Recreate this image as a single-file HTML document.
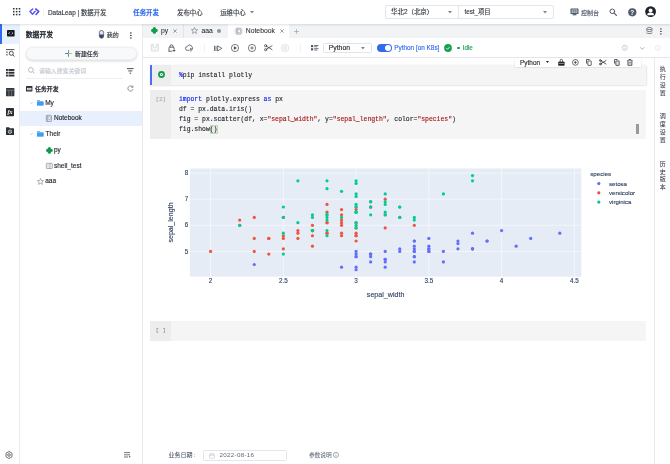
<!DOCTYPE html>
<html lang="zh-CN">
<head>
<meta charset="utf-8">
<title>DataLeap | 数据开发</title>
<style>
*{box-sizing:border-box;margin:0;padding:0}
html,body{width:670px;height:464px;overflow:hidden;background:#fff}
body{position:relative;font-family:"Liberation Sans","Noto Sans CJK SC",sans-serif;font-size:6.4px;color:#1d2129;-webkit-font-smoothing:antialiased;-webkit-text-stroke-width:0.13px;will-change:transform}
.a{position:absolute}
.t{position:absolute;white-space:nowrap;line-height:10px;height:10px;margin-top:-5px}
.b{font-weight:bold}
.mono{font-family:"Liberation Mono","DejaVu Sans Mono",monospace;font-size:6.42px;white-space:pre}
svg{display:block;overflow:visible}
.ic{position:absolute}
.kw{color:#0a1bf5}.st{color:#a31515}
</style>
</head>
<body>

<!-- ===== header ===== -->
<div class="a" id="header" style="left:0;top:0;width:670px;height:24px;background:#fff;box-shadow:0 0.5px 2px rgba(0,0,0,.12);z-index:5">
  <svg class="ic" style="left:13px;top:8px" width="8" height="8" viewBox="0 0 8 8" fill="#2b2f36">
    <rect x="0" y="0" width="1.5" height="1.5"/><rect x="2.9" y="0" width="1.5" height="1.5"/><rect x="5.8" y="0" width="1.5" height="1.5"/>
    <rect x="0" y="2.9" width="1.5" height="1.5"/><rect x="2.9" y="2.9" width="1.5" height="1.5"/><rect x="5.8" y="2.9" width="1.5" height="1.5"/>
    <rect x="0" y="5.8" width="1.5" height="1.5"/><rect x="2.9" y="5.8" width="1.5" height="1.5"/><rect x="5.8" y="5.8" width="1.5" height="1.5"/>
  </svg>
  <svg class="ic" style="left:28.9px;top:8px" width="11" height="8" viewBox="0 0 11 8" fill="none" stroke-linecap="round" stroke-linejoin="round">
    <path d="M3.7 1 L1 3.6 L3.5 6.3 L6.2 3.3" stroke="#5656fb" stroke-width="1.45"/>
    <path d="M6.7 0.9 L9.8 3.6 L7 6.4" stroke="#4a3ff5" stroke-width="1.45"/>
  </svg>
  <div class="a" style="left:43px;top:7px;width:1px;height:10px;background:#f3f4f6"></div>
  <div class="t" style="left:48px;top:12.8px;font-size:6.4px;color:#33383f">DataLeap | 数据开发</div>
  <div class="t b" style="left:133.3px;top:12.8px;font-size:6.4px;color:#2f6bf0">任务开发</div>
  <div class="t" style="left:177px;top:12.8px;font-size:6.4px;color:#33383f">发布中心</div>
  <div class="t" style="left:220.2px;top:12.8px;font-size:6.4px;color:#33383f">运维中心</div>
  <svg class="ic" style="left:249.6px;top:10.7px" width="4" height="3" viewBox="0 0 4 3"><path d="M0 0H4L2 2.6Z" fill="#7a8599"/></svg>

  <div class="a" style="left:385.4px;top:4.7px;width:168.3px;height:14.6px;border:0.6px solid #e3e5e9;border-radius:2px;background:#fff"></div>
  <div class="a" style="left:458px;top:4.7px;width:0.6px;height:14.6px;background:#e3e5e9"></div>
  <div class="t" style="left:391px;top:12px;font-size:6.45px;color:#33383f">华北2（北京）</div>
  <svg class="ic" style="left:447.8px;top:10.8px" width="4" height="3" viewBox="0 0 4 3"><path d="M0 0H4L2 2.5Z" fill="#7a8599"/></svg>
  <div class="t" style="left:464.4px;top:12px;font-size:6.3px;color:#33383f">test_项目</div>
  <svg class="ic" style="left:543.3px;top:10.8px" width="4" height="3" viewBox="0 0 4 3"><path d="M0 0H4L2 2.5Z" fill="#7a8599"/></svg>

  <svg class="ic" style="left:570px;top:8px" width="9" height="8" viewBox="0 0 9 8">
    <rect x="0.5" y="0.5" width="8" height="5.6" rx="0.6" fill="#4e5969"/>
    <rect x="1.6" y="1.5" width="5.8" height="3.4" fill="#cfd5de"/>
    <path d="M1.6 2.6H7.4M1.6 3.7H7.4M3.5 1.5V4.9M5.5 1.5V4.9" stroke="#4e5969" stroke-width="0.4"/>
    <rect x="2.6" y="6.1" width="3.8" height="1.2" fill="#4e5969"/>
  </svg>
  <div class="t" style="left:581px;top:12.5px;font-size:6px;color:#4e5969">控制台</div>
  <svg class="ic" style="left:609px;top:8px" width="9" height="9" viewBox="0 0 9 9" fill="none" stroke="#4e5969" stroke-linecap="round"><circle cx="3.3" cy="3.3" r="2.3" stroke-width="1"/><path d="M5.2 5.2L7.4 7.4" stroke-width="1.2"/></svg>
  <svg class="ic" style="left:627.8px;top:7.8px" width="9" height="9" viewBox="0 0 9 9"><circle cx="4.3" cy="4.3" r="4.1" fill="#4e5969"/><text x="4.3" y="6.6" font-size="6.4" font-weight="bold" text-anchor="middle" fill="#fff" font-family="Liberation Sans, sans-serif">?</text></svg>
  <svg class="ic" style="left:645px;top:6.2px" width="12" height="12" viewBox="0 0 12 12"><circle cx="5.6" cy="5.6" r="5.4" fill="#1d2129"/><circle cx="5.6" cy="4.4" r="2" fill="#fff"/><path d="M2.1 9.2C2.3 7.2 3.8 6.6 5.6 6.6S8.9 7.2 9.1 9.2Z" fill="#fff"/></svg>
</div>

<!-- ===== left rail ===== -->
<div class="a" id="rail" style="left:0;top:24px;width:20px;height:440px;background:#fff;border-right:0.6px solid #e9eaed">
  <div class="a" style="left:0;top:0;width:19.5px;height:19.5px;background:#e8f0fe"></div>
  <div class="a" style="left:0;top:0;width:1.7px;height:19.5px;background:#2f6bf0"></div>
  <!-- code -->
  <svg class="ic" style="left:6.5px;top:6px" width="8" height="7" viewBox="0 0 8 7"><rect x="0" y="0" width="7.6" height="6.4" rx="0.7" fill="#14171c"/><path d="M2.9 2L1.7 3.2L2.9 4.4M4.7 2L5.9 3.2L4.7 4.4" stroke="#fff" stroke-width="0.7" fill="none"/></svg>
  <!-- search list -->
  <svg class="ic" style="left:5.8px;top:24.6px" width="9" height="8" viewBox="0 0 9 8" fill="none" stroke="#2b2f36" stroke-width="0.85"><path d="M0 0.6H8.4M0 3.2H1.8M0 5.8H1.8"/><circle cx="5.3" cy="4.3" r="2"/><path d="M6.8 5.9L8.4 7.5"/></svg>
  <!-- list -->
  <svg class="ic" style="left:5.8px;top:44.6px" width="9" height="8" viewBox="0 0 9 8" fill="#2b2f36"><rect x="0" y="0" width="8.4" height="1.9"/><rect x="0" y="2.8" width="8.4" height="1.9"/><rect x="0" y="5.6" width="8.4" height="1.9"/><rect x="1.9" y="0" width="0.55" height="8" fill="#fff"/></svg>
  <!-- table -->
  <svg class="ic" style="left:5.8px;top:64px" width="9" height="9" viewBox="0 0 9 9"><rect x="0" y="0" width="8.4" height="8.3" rx="0.5" fill="#33383f"/><path d="M0 2.2H8.4M2.9 2.2V8.3M5.6 2.2V8.3" stroke="#9aa0aa" stroke-width="0.5"/></svg>
  <!-- fx -->
  <svg class="ic" style="left:6.2px;top:84px" width="9" height="9" viewBox="0 0 9 9"><rect x="0" y="0" width="8" height="8.2" rx="0.8" fill="#2b2f36"/><text x="4" y="6.3" font-size="6" font-style="italic" font-weight="bold" text-anchor="middle" fill="#fff" font-family="Liberation Serif, serif">fx</text></svg>
  <!-- cloud folder -->
  <svg class="ic" style="left:6.2px;top:103.2px" width="9" height="9" viewBox="0 0 9 9"><path d="M0 0.7Q0 0.2 0.5 0.2H3L3.9 1.2H7.5Q8 1.2 8 1.7V7.4Q8 7.9 7.5 7.9H0.5Q0 7.9 0 7.4Z" fill="#2b2f36"/><circle cx="4" cy="4.7" r="1.7" fill="none" stroke="#fff" stroke-width="0.7"/><circle cx="4" cy="4.7" r="0.55" fill="#fff"/></svg>
  <!-- gear -->
  <svg class="ic" style="left:4.6px;top:427px" width="8" height="8" viewBox="0 0 8 8" fill="none" stroke="#33383f" stroke-width="0.7"><path d="M4 0.5L7 2.2V5.8L4 7.5L1 5.8V2.2Z"/><circle cx="4" cy="4" r="1.3"/></svg>
</div>

<!-- ===== side panel ===== -->
<div class="a" id="side" style="left:20px;top:24px;width:122.6px;height:440px;background:#fff;border-right:0.6px solid #e9eaed">
  <div class="t" style="left:5.8px;top:10.8px;font-size:6.8px;color:#1d2129;-webkit-text-stroke-width:0.32px">数据开发</div>
  <svg class="ic" style="left:79px;top:6px" width="5" height="9" viewBox="0 0 5 9"><rect x="0.4" y="0.4" width="4.2" height="7.8" rx="2.1" fill="#dfe5f2" stroke="#3b4660" stroke-width="0.7"/><path d="M0.4 4.6H4.6V6.1A2.1 2.1 0 0 1 0.4 6.1Z" fill="#3b4660"/></svg>
  <div class="t" style="left:86.8px;top:10.8px;font-size:6px;color:#33383f">我的</div>
  <svg class="ic" style="left:109.6px;top:7.5px" width="2" height="8" viewBox="0 0 2 8" fill="#1d2129"><circle cx="0.9" cy="0.9" r="0.75"/><circle cx="0.9" cy="3.5" r="0.75"/><circle cx="0.9" cy="6.1" r="0.75"/></svg>

  <div class="a" style="left:5.6px;top:22.8px;width:111.8px;height:13.6px;border-radius:7px;background:#f8f9fb;border:0.5px solid #eef0f3;box-shadow:0 1px 3px rgba(0,0,0,.17)"></div>
  <svg class="ic" style="left:45px;top:26.2px" width="7" height="7" viewBox="0 0 7 7" stroke-width="1" stroke-linecap="round"><path d="M3.5 0.6V3.5" stroke="#37a0f5"/><path d="M3.5 3.5V6.4" stroke="#35b34a"/><path d="M0.6 3.5H3.5" stroke="#3b6cf5"/><path d="M3.5 3.5H6.4" stroke="#f5b400"/></svg>
  <div class="t" style="left:55px;top:29.6px;font-size:5.9px;color:#1d2129">新建任务</div>

  <svg class="ic" style="left:8.3px;top:42.7px" width="7" height="7" viewBox="0 0 7 7" fill="none" stroke="#9aa1ad" stroke-width="0.7"><circle cx="2.9" cy="2.9" r="2.4"/><path d="M4.7 4.7L6.4 6.4"/></svg>
  <div class="t" style="left:19px;top:46.8px;font-size:5.9px;color:#c4c8cf">请输入搜索关键词</div>
  <div class="a" style="left:6.4px;top:54px;width:97px;height:1px;background:#eceef1"></div>
  <svg class="ic" style="left:107.3px;top:43.5px" width="7" height="6" viewBox="0 0 7 6" stroke="#33383f" stroke-width="0.9"><path d="M0 0.6H6.6M1.3 2.9H5.3M2.5 5.2H4.1"/></svg>

  <!-- tree -->
  <svg class="ic" style="left:6px;top:61.8px" width="7" height="6" viewBox="0 0 7 6"><rect x="0" y="0" width="6.4" height="5.4" rx="0.6" fill="#2b2f36"/><rect x="1" y="1.9" width="4.4" height="2.3" fill="#fff"/><path d="M1.4 3.1H5" stroke="#2b2f36" stroke-width="0.6"/></svg>
  <div class="t" style="left:15px;top:64.9px;font-size:5.9px;color:#1d2129;-webkit-text-stroke:0.25px #1d2129">任务开发</div>
  <svg class="ic" style="left:106.8px;top:61.2px" width="7" height="7" viewBox="0 0 7 7" fill="none" stroke="#4e5969" stroke-width="0.65"><path d="M5.6 2A2.6 2.6 0 1 0 6 4.2"/><path d="M5.9 0.5V2.2H4.2" /></svg>

  <svg class="ic" style="left:9.6px;top:77.6px" width="3" height="2" viewBox="0 0 3 2" fill="none" stroke="#9aa1ad" stroke-width="0.5"><path d="M0.2 0.3L1.5 1.6L2.8 0.3"/></svg>
  <svg class="ic" style="left:17px;top:75.5px" width="7" height="6" viewBox="0 0 7 6"><path d="M0 0.5Q0 0 0.5 0H2.5L3.3 0.9H6Q6.5 0.9 6.5 1.4V5Q6.5 5.5 6 5.5H0.5Q0 5.5 0 5Z" fill="#6db8f7"/><path d="M0 1.9H6.5V5Q6.5 5.5 6 5.5H0.5Q0 5.5 0 5Z" fill="#3d9ff2"/></svg>
  <div class="t" style="left:25.2px;top:78.6px;font-size:6.5px;color:#1d2129">My</div>

  <div class="a" style="left:0;top:87.3px;width:122px;height:14.7px;background:#e8f0fe"></div>
  <svg class="ic" style="left:26.2px;top:91.2px" width="6" height="7" viewBox="0 0 6 7"><rect x="0.3" y="0.3" width="5.2" height="6.2" rx="0.7" fill="#dfe2e8" stroke="#6b7585" stroke-width="0.55"/><rect x="2" y="2" width="2.6" height="2.6" fill="#fff" stroke="#6b7585" stroke-width="0.45"/><path d="M1.2 0.3V6.5" stroke="#6b7585" stroke-width="0.45"/></svg>
  <div class="t" style="left:34px;top:94.4px;font-size:6.5px;color:#1d2129">Notebook</div>

  <svg class="ic" style="left:9.6px;top:108.8px" width="3" height="2" viewBox="0 0 3 2" fill="none" stroke="#9aa1ad" stroke-width="0.5"><path d="M0.2 0.3L1.5 1.6L2.8 0.3"/></svg>
  <svg class="ic" style="left:17px;top:106.8px" width="7" height="6" viewBox="0 0 7 6"><path d="M0 0.5Q0 0 0.5 0H2.5L3.3 0.9H6Q6.5 0.9 6.5 1.4V5Q6.5 5.5 6 5.5H0.5Q0 5.5 0 5Z" fill="#6db8f7"/><path d="M0 1.9H6.5V5Q6.5 5.5 6 5.5H0.5Q0 5.5 0 5Z" fill="#3d9ff2"/></svg>
  <div class="t" style="left:25.6px;top:110px;font-size:6.5px;color:#1d2129">Their</div>

  <svg class="ic" style="left:25.8px;top:122.8px" width="7" height="7" viewBox="0 0 7 7" fill="#0f9d4c"><circle cx="3.4" cy="1.65" r="1.6"/><circle cx="1.65" cy="3.4" r="1.6"/><circle cx="5.15" cy="3.4" r="1.6"/><circle cx="3.4" cy="5.15" r="1.6"/><rect x="2.4" y="2.4" width="2" height="2"/></svg>
  <div class="t" style="left:34px;top:125.8px;font-size:6.5px;color:#1d2129">py</div>

  <svg class="ic" style="left:25.8px;top:138.6px" width="7" height="6" viewBox="0 0 7 6"><rect x="0.3" y="0.3" width="6" height="5.2" rx="0.5" fill="#f3f4f7" stroke="#6b7585" stroke-width="0.55"/><path d="M4 0.3V5.5" stroke="#6b7585" stroke-width="0.5"/><path d="M1.3 2H2.8M1.3 3.6H2.8" stroke="#9aa1ad" stroke-width="0.45"/></svg>
  <div class="t" style="left:34px;top:142.2px;font-size:6.5px;color:#1d2129">shell_test</div>

  <svg class="ic" style="left:16.8px;top:153.6px" width="7" height="7" viewBox="0 0 7 7" fill="none" stroke="#5b6575" stroke-width="0.5" stroke-linejoin="round"><path d="M3.5 0.5L4.4 2.5L6.6 2.7L4.9 4.2L5.4 6.4L3.5 5.2L1.6 6.4L2.1 4.2L0.4 2.7L2.6 2.5Z"/></svg>
  <div class="t" style="left:25.2px;top:157.3px;font-size:6.5px;color:#1d2129">aaa</div>

  <svg class="ic" style="left:104.2px;top:428px" width="7" height="6" viewBox="0 0 7 6" stroke="#33383f" stroke-width="0.7"><path d="M0 0.6H6M0 2.8H6M0 5H4"/><path d="M4.8 4.3H6.6L5.7 5.7Z" fill="#33383f" stroke="none"/></svg>
</div>

<!-- ===== main ===== -->
<div class="a" id="tabs" style="left:142.6px;top:24px;width:527.4px;height:14px;background:#f2f3f5;-webkit-text-stroke-width:0.05px">
  <!-- py tab -->
  <svg class="ic" style="left:8.6px;top:3.4px" width="7" height="7" viewBox="0 0 7 7" fill="#0f9d4c"><circle cx="3.4" cy="1.65" r="1.6"/><circle cx="1.65" cy="3.4" r="1.6"/><circle cx="5.15" cy="3.4" r="1.6"/><circle cx="3.4" cy="5.15" r="1.6"/><rect x="2.4" y="2.4" width="2" height="2"/></svg>
  <div class="t" style="left:18.4px;top:7.3px;font-size:6.8px;color:#1d2129">py</div>
  <svg class="ic" style="left:30.8px;top:4.5px" width="4" height="4" viewBox="0 0 4 4" stroke="#4e5969" stroke-width="0.55"><path d="M0.3 0.3L3.7 3.7M3.7 0.3L0.3 3.7"/></svg>
  <div class="a" style="left:40.7px;top:0;width:0.6px;height:14px;background:#e3e5e9"></div>
  <!-- aaa tab -->
  <svg class="ic" style="left:48.8px;top:3.2px" width="7" height="7" viewBox="0 0 7 7" fill="none" stroke="#4e5969" stroke-width="0.5" stroke-linejoin="round"><path d="M3.5 0.5L4.4 2.5L6.6 2.7L4.9 4.2L5.4 6.4L3.5 5.2L1.6 6.4L2.1 4.2L0.4 2.7L2.6 2.5Z"/></svg>
  <div class="t" style="left:58.8px;top:7.3px;font-size:6.8px;color:#1d2129">aaa</div>
  <div class="a" style="left:74.2px;top:5px;width:4.4px;height:4.4px;border-radius:50%;background:#8a93a3"></div>
  <!-- notebook tab -->
  <div class="a" style="left:85.2px;top:0;width:61.2px;height:14px;background:#fff"></div>
  <div class="a" style="left:91.8px;top:2.6px;width:8.6px;height:8.6px;border-radius:50%;background:#edeff3"></div>
  <svg class="ic" style="left:93.4px;top:3.8px" width="6" height="7" viewBox="0 0 6 7"><rect x="0.3" y="0.3" width="4.9" height="5.9" rx="0.7" fill="#dfe2e8" stroke="#8a93a3" stroke-width="0.5"/><rect x="1.9" y="1.9" width="2.4" height="2.4" fill="#fff" stroke="#8a93a3" stroke-width="0.4"/><path d="M1.2 0.3V6.2" stroke="#8a93a3" stroke-width="0.4"/></svg>
  <div class="t" style="left:103.2px;top:7.3px;font-size:6.8px;color:#1d2129">Notebook</div>
  <svg class="ic" style="left:137px;top:4.5px" width="4" height="4" viewBox="0 0 4 4" stroke="#4e5969" stroke-width="0.55"><path d="M0.3 0.3L3.7 3.7M3.7 0.3L0.3 3.7"/></svg>
  <svg class="ic" style="left:151.6px;top:4.6px" width="5" height="5" viewBox="0 0 5 5" stroke="#8a93a3" stroke-width="0.55"><path d="M2.5 0V5M0 2.5H5"/></svg>
  <!-- right icons -->
  <svg class="ic" style="left:503px;top:3px" width="7" height="8" viewBox="0 0 7 8" fill="none" stroke="#33383f" stroke-width="0.6"><ellipse cx="3.4" cy="1.6" rx="2.5" ry="1.1"/><path d="M0.4 3.7C0.8 4.9 6 4.9 6.4 3.7M0.4 5.6C0.8 6.9 6 6.9 6.4 5.6M0.9 1.7V3.7M5.9 1.7V3.7"/></svg>
  <svg class="ic" style="left:517.6px;top:3.5px" width="2" height="8" viewBox="0 0 2 8" fill="#1d2129"><circle cx="0.9" cy="0.9" r="0.7"/><circle cx="0.9" cy="3.4" r="0.7"/><circle cx="0.9" cy="5.9" r="0.7"/></svg>
</div>

<div class="a" id="toolbar" style="left:142.6px;top:38px;width:527.4px;height:19.6px;background:#fff;border-bottom:0.6px solid #e3e5e9">
  <!-- save (disabled) -->
  <svg class="ic" style="left:8px;top:6px" width="8" height="8" viewBox="0 0 8 8" fill="#f4f5f7" stroke="#c9cdd4" stroke-width="0.6"><rect x="0.3" y="0.3" width="7.2" height="6.8" rx="0.6"/><path d="M2 0.3V3H5.8V0.3" fill="#fff"/></svg>
  <!-- lock -->
  <svg class="ic" style="left:25.6px;top:5.6px" width="8" height="8" viewBox="0 0 8 8" fill="none" stroke="#33383f" stroke-width="0.75" stroke-linecap="round"><path d="M1 7.2V3.9Q1 3.1 1.8 3.1H5.2Q6 3.1 6 3.9V4.6M1 7.2H4"/><path d="M2 3.1V2.3A1.5 1.5 0 0 1 5 2.3V3.1"/><path d="M5.2 6.5H7M6.1 5.6V7.4"/></svg>
  <!-- cloud -->
  <svg class="ic" style="left:42.6px;top:5.8px" width="9" height="8" viewBox="0 0 9 8" fill="none" stroke="#33383f" stroke-width="0.7" stroke-linecap="round" stroke-linejoin="round"><path d="M4 6.3H2.3A1.8 1.8 0 0 1 2.2 2.7A2.5 2.5 0 0 1 7 2.9A1.7 1.7 0 0 1 7.4 5"/><path d="M6 7.2V4.6M4.9 5.6L6 4.5L7.1 5.6"/></svg>
  <div class="a" style="left:61.4px;top:6px;width:1px;height:7.6px;background:#f0f1f3"></div>
  <!-- run all -->
  <svg class="ic" style="left:71.6px;top:6.5px" width="9" height="7" viewBox="0 0 9 7" fill="none" stroke="#33383f" stroke-width="0.7" stroke-linejoin="round"><path d="M0.5 0.8V6M2 0.8V6"/><path d="M3.6 0.9L7.8 3.4L3.6 5.9Z"/></svg>
  <!-- play circle -->
  <svg class="ic" style="left:88.4px;top:6px" width="8" height="8" viewBox="0 0 8 8" fill="none" stroke="#33383f" stroke-width="0.65" stroke-linejoin="round"><circle cx="4" cy="4" r="3.6"/><path d="M3.1 2.5L5.6 4L3.1 5.5Z" fill="#33383f" stroke-width="0.3"/></svg>
  <!-- plus circle -->
  <svg class="ic" style="left:105.4px;top:6px" width="8" height="8" viewBox="0 0 8 8" fill="none" stroke="#33383f" stroke-width="0.65"><circle cx="4" cy="4" r="3.6"/><path d="M4 2.3V5.7M2.3 4H5.7"/></svg>
  <!-- scissors -->
  <svg class="ic" style="left:121.8px;top:6.2px" width="9" height="8" viewBox="0 0 9 8" fill="none" stroke="#33383f" stroke-width="0.75" stroke-linecap="round"><circle cx="1.6" cy="1.7" r="1.1"/><circle cx="1.6" cy="5.7" r="1.1"/><path d="M2.6 2.3L8 5.6M2.6 5.1L8 1.8"/></svg>
  <!-- stop disabled -->
  <svg class="ic" style="left:138.6px;top:6px" width="8" height="8" viewBox="0 0 8 8" fill="none" stroke="#c9cdd4" stroke-width="0.6"><circle cx="4" cy="4" r="3.6"/><rect x="2.7" y="2.7" width="2.6" height="2.6" rx="0.3"/></svg>
  <div class="a" style="left:157.4px;top:6px;width:1px;height:7.6px;background:#f0f1f3"></div>
  <!-- list icon -->
  <svg class="ic" style="left:168.2px;top:7px" width="8" height="6" viewBox="0 0 8 6" fill="#4e5969"><rect x="0" y="0" width="2.2" height="2.2"/><rect x="0" y="3.2" width="2.2" height="2.2"/><rect x="3.2" y="0.1" width="4.3" height="0.8"/><rect x="3.2" y="1.4" width="3.2" height="0.8"/><rect x="3.2" y="3.3" width="4.3" height="0.8"/><rect x="3.2" y="4.6" width="3.2" height="0.8"/></svg>
  <!-- select -->
  <div class="a" style="left:180.6px;top:4.9px;width:48.8px;height:10.6px;border:0.6px solid #e3e5e9;border-radius:1.5px;background:#fff"></div>
  <div class="t" style="left:186.2px;top:10.4px;font-size:6.8px;color:#1d2129">Python</div>
  <svg class="ic" style="left:218.6px;top:9px" width="4" height="3" viewBox="0 0 4 3"><path d="M0 0H3.8L1.9 2.5Z" fill="#7a8599"/></svg>
  <!-- toggle -->
  <div class="a" style="left:234.4px;top:6px;width:14.6px;height:8px;border-radius:4px;background:#2f6bf0"></div>
  <div class="a" style="left:242.2px;top:7px;width:6px;height:6px;border-radius:50%;background:#fff"></div>
  <div class="t" style="left:251.7px;top:9.6px;font-size:6.4px;color:#2f6bf0">Python [on K8s]</div>
  <svg class="ic" style="left:301.8px;top:6px" width="8" height="8" viewBox="0 0 8 8"><circle cx="4" cy="4" r="3.9" fill="#1a9f52"/><path d="M2.3 4.1L3.5 5.3L5.7 2.9" stroke="#fff" stroke-width="0.8" fill="none"/></svg>
  <div class="a" style="left:314.6px;top:9px;width:2.4px;height:2.4px;border-radius:50%;background:#1a9f52"></div>
  <div class="t" style="left:320.1px;top:10.2px;font-size:6.3px;color:#1a9f52">Idle</div>
  <!-- right icons -->
  <svg class="ic" style="left:479.2px;top:7.2px" width="6" height="6" viewBox="0 0 6 6" fill="none" stroke="#8a93a3" stroke-width="0.45"><circle cx="2.8" cy="2.8" r="2.5"/><path d="M2.8 2.5V4.2M2.8 1.4V1.9"/></svg>
  <svg class="ic" style="left:497.4px;top:8.7px" width="5" height="3" viewBox="0 0 5 3" fill="none" stroke="#6b7585" stroke-width="0.55"><path d="M0.3 0.3L2.3 2.3L4.3 0.3"/></svg>
  <svg class="ic" style="left:512px;top:7.2px" width="6" height="6" viewBox="0 0 6 6" fill="none" stroke="#cfd3da" stroke-width="0.45"><circle cx="2.8" cy="2.8" r="2.5"/><path d="M2.8 2.5V4.2M2.8 1.4V1.9"/></svg>
</div>

<!-- right sidebar -->
<div class="a" id="rsb" style="left:654px;top:58px;width:16px;height:406px;background:#fff;border-left:0.6px solid #e9ebee;font-size:6px;color:#33383f;-webkit-text-stroke-width:0.05px;text-align:center;line-height:7.9px">
  <div class="a" style="left:-0.6px;top:8px;width:16.6px">执<br>行<br>设<br>置</div>
  <div class="a" style="left:-0.6px;top:55.2px;width:16.6px">调<br>度<br>设<br>置</div>
  <div class="a" style="left:-0.6px;top:102.6px;width:16.6px">历<br>史<br>版<br>本</div>
</div>

<!-- ===== notebook ===== -->
<div class="a" id="cell1" style="left:150.2px;top:64.8px;width:496.2px;height:20px;background:rgba(245,245,245,0.996);border-radius:0 1.5px 1.5px 0;box-shadow:0.5px 0.5px 1.5px rgba(0,0,0,.10)">
  <div class="a" style="left:0;top:0;width:1.7px;height:20px;background:#4a6cf7"></div>
  <div class="a" style="left:1.5px;top:0;width:19.4px;height:20px;background:rgba(237,237,237,0.996)"></div>
  <svg class="ic" style="left:7.8px;top:6.3px" width="7" height="7" viewBox="0 0 7 7"><circle cx="3.5" cy="3.5" r="3.4" fill="#0f9d4c"/><circle cx="3.5" cy="3.5" r="1.55" fill="#fff"/><path d="M3.05 2.7L4.45 3.5L3.05 4.3Z" fill="#0f9d4c"/></svg>
  <div class="t mono" style="left:28.8px;top:11px"><span class="kw">%</span>pip install plotly</div>
</div>
<!-- cell toolbar -->
<div class="a" id="celltb" style="left:514.5px;top:57.6px;width:126.7px;height:9.8px;background:#fff;box-shadow:0 0.5px 1.5px rgba(0,0,0,.18)">
  <div class="t" style="left:5.6px;top:5.2px;font-size:6.4px;color:#1d2129">Python</div>
  <svg class="ic" style="left:31.6px;top:3.8px" width="3" height="2" viewBox="0 0 3 2"><path d="M0 0H3L1.5 1.9Z" fill="#1d2129"/></svg>
  <svg class="ic" style="left:43.6px;top:1.4px" width="7" height="7" viewBox="0 0 7 7" fill="none" stroke="#1d2129" stroke-width="0.7"><path d="M0.6 3H6.2V6.3H0.6Z" fill="#1d2129"/><path d="M2.2 3V1.6A1.2 1.2 0 0 1 4.6 1.6V3"/><path d="M0.6 4.4H6.2" stroke="#fff" stroke-width="0.5"/></svg>
  <svg class="ic" style="left:57.5px;top:1.5px" width="7" height="7" viewBox="0 0 7 7" fill="none" stroke="#1d2129" stroke-width="0.65"><circle cx="3.4" cy="3.4" r="2.9"/><path d="M3.4 1.9V4.9M1.9 3.4H4.9"/></svg>
  <svg class="ic" style="left:71.6px;top:1.3px" width="6" height="7" viewBox="0 0 6 7" fill="none" stroke="#1d2129" stroke-width="0.7"><path d="M0.5 4.6V0.5H3.6"/><rect x="1.8" y="1.9" width="3.4" height="4.5" rx="0.4" fill="#fff"/></svg>
  <svg class="ic" style="left:84.6px;top:1.6px" width="8" height="7" viewBox="0 0 8 7" fill="none" stroke="#1d2129" stroke-width="0.75" stroke-linecap="round"><circle cx="1.4" cy="1.5" r="0.9"/><circle cx="1.4" cy="5" r="0.9"/><path d="M2.2 2L7 5M2.2 4.5L7 1.5"/></svg>
  <svg class="ic" style="left:99px;top:1.3px" width="6" height="7" viewBox="0 0 6 7" fill="none" stroke="#1d2129" stroke-width="0.7"><path d="M0.5 4.6V0.5H3.6"/><rect x="1.8" y="1.9" width="3.4" height="4.5" rx="0.4" fill="#dfe2e8"/></svg>
  <svg class="ic" style="left:112.8px;top:1.3px" width="6" height="7" viewBox="0 0 6 7" fill="none" stroke="#1d2129" stroke-width="0.7"><path d="M0.3 1.6H5.5M1.9 1.6V0.5H3.9V1.6"/><path d="M0.9 1.6V6.3H4.9V1.6" fill="#dfe2e8"/><path d="M1.6 3.8H4.2" stroke-width="0.5"/></svg>
</div>

<div class="a" id="cell2" style="left:150.2px;top:89.6px;width:496.2px;height:49.2px;background:rgba(245,245,245,0.996)">
  <div class="a" style="left:0;top:0;width:20.9px;height:49.2px;background:rgba(237,237,237,0.996)"></div>
  <div class="t mono" style="left:5.2px;top:10.1px;color:#a9aeb8;font-size:6px">[2]</div>
  <div class="a" style="left:59.6px;top:35px;width:7.8px;height:9px;background:#e3efe3;border:0.5px solid #c5d6c5"></div>
  <div class="t mono" style="left:28.8px;top:10.6px"><span class="kw">import</span> plotly.express <span class="kw">as</span> px</div>
  <div class="t mono" style="left:28.8px;top:20.4px">df = px.data.iris()</div>
  <div class="t mono" style="left:28.8px;top:30.2px">fig = px.scatter(df, x=<span class="st">"sepal_width"</span>, y=<span class="st">"sepal_length"</span>, color=<span class="st">"species"</span>)</div>
  <div class="t mono" style="left:28.8px;top:40px">fig.show()</div>
  <div class="a" style="left:486.2px;top:34.6px;width:3px;height:9.4px;background:#9a9a9a"></div>
</div>

<svg class="plot" width="670" height="464" viewBox="0 0 670 464" style="position:absolute;left:0;top:0;pointer-events:none">
<rect x="189.9" y="168.5" width="391.4" height="108.1" fill="#e5ecf6"/>
<line x1="210.60" x2="210.60" y1="168.5" y2="276.6" stroke="#fff" stroke-width="0.55"/>
<line x1="283.35" x2="283.35" y1="168.5" y2="276.6" stroke="#fff" stroke-width="0.55"/>
<line x1="356.10" x2="356.10" y1="168.5" y2="276.6" stroke="#fff" stroke-width="0.55"/>
<line x1="428.85" x2="428.85" y1="168.5" y2="276.6" stroke="#fff" stroke-width="0.55"/>
<line x1="501.60" x2="501.60" y1="168.5" y2="276.6" stroke="#fff" stroke-width="0.55"/>
<line x1="574.35" x2="574.35" y1="168.5" y2="276.6" stroke="#fff" stroke-width="0.55"/>
<line y1="251.45" y2="251.45" x1="189.9" x2="581.3" stroke="#fff" stroke-width="0.55"/>
<line y1="225.30" y2="225.30" x1="189.9" x2="581.3" stroke="#fff" stroke-width="0.55"/>
<line y1="199.15" y2="199.15" x1="189.9" x2="581.3" stroke="#fff" stroke-width="0.55"/>
<line y1="173.00" y2="173.00" x1="189.9" x2="581.3" stroke="#fff" stroke-width="0.55"/>
<g fill="#636efa">
<circle cx="428.85" cy="248.84" r="1.6"/>
<circle cx="356.10" cy="254.06" r="1.6"/>
<circle cx="385.20" cy="259.29" r="1.6"/>
<circle cx="370.65" cy="261.91" r="1.6"/>
<circle cx="443.40" cy="251.45" r="1.6"/>
<circle cx="487.05" cy="240.99" r="1.6"/>
<circle cx="414.30" cy="261.91" r="1.6"/>
<circle cx="414.30" cy="251.45" r="1.6"/>
<circle cx="341.55" cy="267.14" r="1.6"/>
<circle cx="370.65" cy="254.06" r="1.6"/>
<circle cx="457.95" cy="240.99" r="1.6"/>
<circle cx="414.30" cy="256.68" r="1.6"/>
<circle cx="356.10" cy="256.68" r="1.6"/>
<circle cx="356.10" cy="269.75" r="1.6"/>
<circle cx="501.60" cy="230.53" r="1.6"/>
<circle cx="559.80" cy="233.14" r="1.6"/>
<circle cx="487.05" cy="240.99" r="1.6"/>
<circle cx="428.85" cy="248.84" r="1.6"/>
<circle cx="472.50" cy="233.14" r="1.6"/>
<circle cx="472.50" cy="248.84" r="1.6"/>
<circle cx="414.30" cy="240.99" r="1.6"/>
<circle cx="457.95" cy="248.84" r="1.6"/>
<circle cx="443.40" cy="261.91" r="1.6"/>
<circle cx="399.75" cy="248.84" r="1.6"/>
<circle cx="414.30" cy="256.68" r="1.6"/>
<circle cx="356.10" cy="251.45" r="1.6"/>
<circle cx="414.30" cy="251.45" r="1.6"/>
<circle cx="428.85" cy="246.22" r="1.6"/>
<circle cx="414.30" cy="246.22" r="1.6"/>
<circle cx="385.20" cy="259.29" r="1.6"/>
<circle cx="370.65" cy="256.68" r="1.6"/>
<circle cx="414.30" cy="240.99" r="1.6"/>
<circle cx="516.15" cy="246.22" r="1.6"/>
<circle cx="530.70" cy="238.38" r="1.6"/>
<circle cx="370.65" cy="254.06" r="1.6"/>
<circle cx="385.20" cy="251.45" r="1.6"/>
<circle cx="428.85" cy="238.38" r="1.6"/>
<circle cx="370.65" cy="254.06" r="1.6"/>
<circle cx="356.10" cy="267.14" r="1.6"/>
<circle cx="414.30" cy="248.84" r="1.6"/>
<circle cx="428.85" cy="251.45" r="1.6"/>
<circle cx="254.25" cy="264.52" r="1.6"/>
<circle cx="385.20" cy="267.14" r="1.6"/>
<circle cx="428.85" cy="251.45" r="1.6"/>
<circle cx="472.50" cy="248.84" r="1.6"/>
<circle cx="356.10" cy="256.68" r="1.6"/>
<circle cx="472.50" cy="248.84" r="1.6"/>
<circle cx="385.20" cy="261.91" r="1.6"/>
<circle cx="457.95" cy="243.61" r="1.6"/>
<circle cx="399.75" cy="251.45" r="1.6"/>
</g>
<g fill="#ef553b">
<circle cx="385.20" cy="199.15" r="1.6"/>
<circle cx="385.20" cy="214.84" r="1.6"/>
<circle cx="370.65" cy="201.76" r="1.6"/>
<circle cx="254.25" cy="238.38" r="1.6"/>
<circle cx="327.00" cy="212.22" r="1.6"/>
<circle cx="327.00" cy="233.14" r="1.6"/>
<circle cx="399.75" cy="217.46" r="1.6"/>
<circle cx="268.80" cy="254.06" r="1.6"/>
<circle cx="341.55" cy="209.61" r="1.6"/>
<circle cx="312.45" cy="246.22" r="1.6"/>
<circle cx="210.60" cy="251.45" r="1.6"/>
<circle cx="356.10" cy="227.91" r="1.6"/>
<circle cx="239.70" cy="225.30" r="1.6"/>
<circle cx="341.55" cy="222.69" r="1.6"/>
<circle cx="341.55" cy="235.76" r="1.6"/>
<circle cx="370.65" cy="207.00" r="1.6"/>
<circle cx="356.10" cy="235.76" r="1.6"/>
<circle cx="312.45" cy="230.53" r="1.6"/>
<circle cx="239.70" cy="220.07" r="1.6"/>
<circle cx="283.35" cy="235.76" r="1.6"/>
<circle cx="385.20" cy="227.91" r="1.6"/>
<circle cx="327.00" cy="222.69" r="1.6"/>
<circle cx="283.35" cy="217.46" r="1.6"/>
<circle cx="327.00" cy="222.69" r="1.6"/>
<circle cx="341.55" cy="214.84" r="1.6"/>
<circle cx="356.10" cy="209.61" r="1.6"/>
<circle cx="327.00" cy="204.38" r="1.6"/>
<circle cx="356.10" cy="207.00" r="1.6"/>
<circle cx="341.55" cy="225.30" r="1.6"/>
<circle cx="297.90" cy="233.14" r="1.6"/>
<circle cx="268.80" cy="238.38" r="1.6"/>
<circle cx="268.80" cy="238.38" r="1.6"/>
<circle cx="312.45" cy="230.53" r="1.6"/>
<circle cx="312.45" cy="225.30" r="1.6"/>
<circle cx="356.10" cy="240.99" r="1.6"/>
<circle cx="414.30" cy="225.30" r="1.6"/>
<circle cx="370.65" cy="207.00" r="1.6"/>
<circle cx="254.25" cy="217.46" r="1.6"/>
<circle cx="356.10" cy="235.76" r="1.6"/>
<circle cx="283.35" cy="238.38" r="1.6"/>
<circle cx="297.90" cy="238.38" r="1.6"/>
<circle cx="356.10" cy="222.69" r="1.6"/>
<circle cx="297.90" cy="230.53" r="1.6"/>
<circle cx="254.25" cy="251.45" r="1.6"/>
<circle cx="312.45" cy="235.76" r="1.6"/>
<circle cx="356.10" cy="233.14" r="1.6"/>
<circle cx="341.55" cy="233.14" r="1.6"/>
<circle cx="341.55" cy="220.07" r="1.6"/>
<circle cx="283.35" cy="248.84" r="1.6"/>
<circle cx="327.00" cy="233.14" r="1.6"/>
</g>
<g fill="#00cc96">
<circle cx="399.75" cy="217.46" r="1.6"/>
<circle cx="312.45" cy="230.53" r="1.6"/>
<circle cx="356.10" cy="196.53" r="1.6"/>
<circle cx="341.55" cy="217.46" r="1.6"/>
<circle cx="356.10" cy="212.22" r="1.6"/>
<circle cx="356.10" cy="183.46" r="1.6"/>
<circle cx="283.35" cy="254.06" r="1.6"/>
<circle cx="341.55" cy="191.31" r="1.6"/>
<circle cx="283.35" cy="207.00" r="1.6"/>
<circle cx="443.40" cy="193.92" r="1.6"/>
<circle cx="385.20" cy="212.22" r="1.6"/>
<circle cx="312.45" cy="214.84" r="1.6"/>
<circle cx="356.10" cy="204.38" r="1.6"/>
<circle cx="283.35" cy="233.14" r="1.6"/>
<circle cx="327.00" cy="230.53" r="1.6"/>
<circle cx="385.20" cy="214.84" r="1.6"/>
<circle cx="356.10" cy="212.22" r="1.6"/>
<circle cx="472.50" cy="180.84" r="1.6"/>
<circle cx="297.90" cy="180.84" r="1.6"/>
<circle cx="239.70" cy="225.30" r="1.6"/>
<circle cx="385.20" cy="201.76" r="1.6"/>
<circle cx="327.00" cy="235.76" r="1.6"/>
<circle cx="327.00" cy="180.84" r="1.6"/>
<circle cx="312.45" cy="217.46" r="1.6"/>
<circle cx="399.75" cy="207.00" r="1.6"/>
<circle cx="385.20" cy="193.92" r="1.6"/>
<circle cx="327.00" cy="220.07" r="1.6"/>
<circle cx="356.10" cy="222.69" r="1.6"/>
<circle cx="327.00" cy="214.84" r="1.6"/>
<circle cx="356.10" cy="193.92" r="1.6"/>
<circle cx="327.00" cy="188.69" r="1.6"/>
<circle cx="472.50" cy="175.61" r="1.6"/>
<circle cx="327.00" cy="214.84" r="1.6"/>
<circle cx="327.00" cy="217.46" r="1.6"/>
<circle cx="297.90" cy="222.69" r="1.6"/>
<circle cx="356.10" cy="180.84" r="1.6"/>
<circle cx="414.30" cy="217.46" r="1.6"/>
<circle cx="370.65" cy="214.84" r="1.6"/>
<circle cx="356.10" cy="225.30" r="1.6"/>
<circle cx="370.65" cy="201.76" r="1.6"/>
<circle cx="370.65" cy="207.00" r="1.6"/>
<circle cx="370.65" cy="201.76" r="1.6"/>
<circle cx="312.45" cy="230.53" r="1.6"/>
<circle cx="385.20" cy="204.38" r="1.6"/>
<circle cx="399.75" cy="207.00" r="1.6"/>
<circle cx="356.10" cy="207.00" r="1.6"/>
<circle cx="283.35" cy="217.46" r="1.6"/>
<circle cx="356.10" cy="212.22" r="1.6"/>
<circle cx="414.30" cy="220.07" r="1.6"/>
<circle cx="356.10" cy="227.91" r="1.6"/>
</g>
<g font-family="Liberation Sans, sans-serif" font-size="6.3" fill="#2a3f5f" stroke="#2a3f5f" stroke-width="0.12">
<text x="210.60" y="283.3" text-anchor="middle">2</text>
<text x="283.35" y="283.3" text-anchor="middle">2.5</text>
<text x="356.10" y="283.3" text-anchor="middle">3</text>
<text x="428.85" y="283.3" text-anchor="middle">3.5</text>
<text x="501.60" y="283.3" text-anchor="middle">4</text>
<text x="574.35" y="283.3" text-anchor="middle">4.5</text>
<text x="188.2" y="253.55" text-anchor="end">5</text>
<text x="188.2" y="227.40" text-anchor="end">6</text>
<text x="188.2" y="201.25" text-anchor="end">7</text>
<text x="188.2" y="175.10" text-anchor="end">8</text>
<text x="385.6" y="296.8" text-anchor="middle" font-size="7.1">sepal_width</text>
<text transform="translate(173.2,222.5) rotate(-90)" text-anchor="middle" font-size="7.1">sepal_length</text>
<text x="590.2" y="176.4" font-size="6.2">species</text>
<circle cx="598.8" cy="183.60" r="1.5" fill="#636efa"/>
<text x="609" y="185.70" font-size="6.1">setosa</text>
<circle cx="598.8" cy="192.85" r="1.5" fill="#ef553b"/>
<text x="609" y="194.95" font-size="6.1">versicolor</text>
<circle cx="598.8" cy="202.10" r="1.5" fill="#00cc96"/>
<text x="609" y="204.20" font-size="6.1">virginica</text>
</g></svg>

<div class="a" id="cell3" style="left:150.2px;top:321px;width:496.2px;height:19.7px;background:rgba(245,245,245,0.996)">
  <div class="a" style="left:0;top:0;width:20.9px;height:19.7px;background:rgba(237,237,237,0.996)"></div>
  <div class="t mono" style="left:5.2px;top:10px;color:#8f959e;font-size:6px">[ ]</div>
</div>

<!-- bottom bar -->
<div class="t" style="left:168.4px;top:455.2px;font-size:6px;color:#4e5969;-webkit-text-stroke-width:0.05px">业务日期<span style="margin-left:1.2px">:</span></div>
<div class="a" style="left:203px;top:450px;width:84.2px;height:10.8px;border:0.6px solid #e3e5e9;border-radius:1.5px;background:#fff"></div>
<svg class="ic" style="left:209.4px;top:452.6px" width="6" height="6" viewBox="0 0 6 6" fill="none" stroke="#b4bac4" stroke-width="0.5"><rect x="0.4" y="0.9" width="4.9" height="4.4" rx="0.5"/><path d="M0.4 2.4H5.3M1.7 0.2V1.4M4 0.2V1.4"/></svg>
<div class="t" style="left:219.6px;top:455.3px;font-size:6.2px;color:#5f6875;letter-spacing:0.3px;-webkit-text-stroke-width:0">2022-08-16</div>
<div class="t" style="left:308.9px;top:455.2px;font-size:5.7px;color:#5f6875;-webkit-text-stroke-width:0.03px">参数说明</div>
<svg class="ic" style="left:333.4px;top:452.4px" width="6" height="6" viewBox="0 0 6 6" fill="none" stroke="#4e5969" stroke-width="0.5"><circle cx="2.9" cy="2.9" r="2.6"/><path d="M2.9 2.6V4.3M2.9 1.4V1.9"/></svg>

</body>
</html>
